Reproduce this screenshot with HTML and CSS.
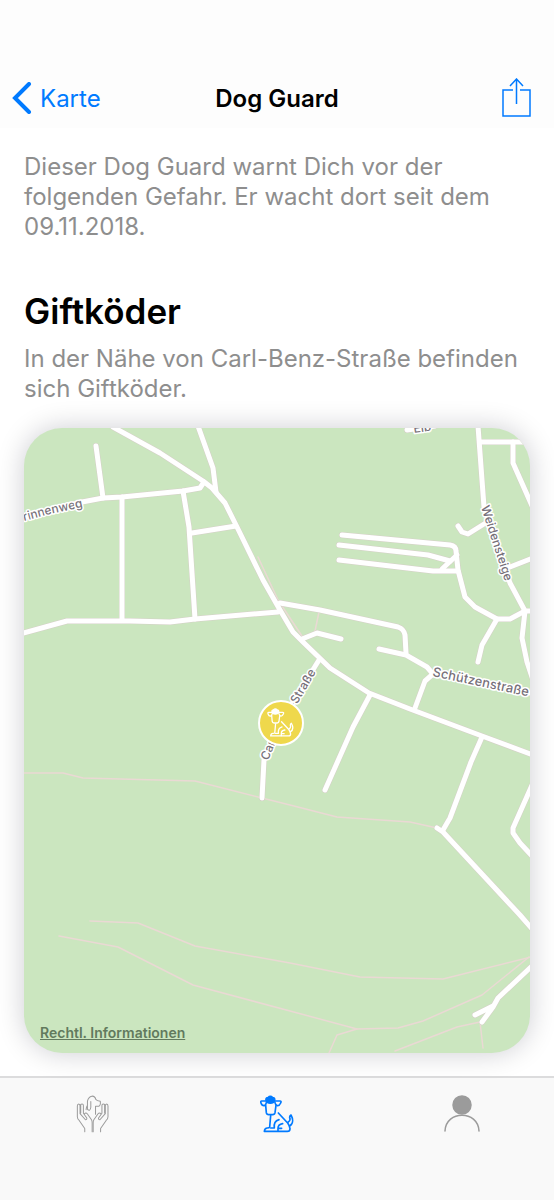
FILE: index.html
```html
<!DOCTYPE html>
<html lang="de">
<head>
<meta charset="utf-8">
<meta name="viewport" content="width=device-width, initial-scale=1">
<title>Dog Guard</title>
<link rel="stylesheet" href="styles.css">
</head>

<body>
<svg class="defs" aria-hidden="true">
    <symbol id="dog" viewBox="44 44 102 112">
        <path class="solid" d="M62 58 Q61 52 68 51 Q75 44 82 51 Q89 52 88 58 L85 65 Q75 70 65 65Z"/>
        <path d="M62 61 H49 Q45 61 47 67 Q50 76 57 75 Q62 73 63 66 M88 61 H104 Q109 61 106 67 Q102 76 96 75 Q90 73 89 66"/>
        <path d="M61 74 L63 96 Q64 102 70 102 H82 Q88 102 89 96 L92 74"/>
        <path d="M76 105 L73 139 Q72 142 66 142 Q58 142 57 152 H126 Q134 152 134 144 Q133 135 127 127 L99 97"/>
        <path d="M133 136 C145 129 143 114 137 103 Q131 107 134 114 Q135 121 128 125"/>
        <path d="M76 142 H87 Q84 122 101 117 M98 151 V143 Q98 131 112 129 M98 143 H109"/>
    </symbol>
</svg>

<header class="navbar">
    <a class="back" href="#karte">
        <svg class="chevron" viewBox="0 0 20 32" aria-hidden="true"><path d="M17 2 L3 16 L17 30"/></svg>
        <span>Karte</span>
    </a>
    <h2 class="navbar-title">Dog Guard</h2>
    <button class="share" type="button" aria-label="Teilen">
        <svg viewBox="0 0 30 40" aria-hidden="true"><path d="M12 12 H2 V38 H29 V12 H19 M15.500 26 V1 M9 8 L15.500 1 L22 8"/></svg>
    </button>
</header>

<main class="content">
    <p class="text">Dieser Dog Guard warnt Dich vor der folgenden Gefahr. Er wacht dort seit dem 09.11.2018.</p>
    <h1 class="danger">Giftköder</h1>
    <p class="text">In der Nähe von Carl-Benz-Straße befinden sich Giftköder.</p>

    <div class="map">
        <svg class="map-canvas" viewBox="24 428 506 625" role="img" aria-label="Karte">
            <defs>
                <g id="roads">
                    <path d="M113 427 L160 453 L203 481 L212 488 L225 503 L237 527 L263 580 L280 610 L293 632 L303 642 L330 668 L369 693 L410 709 L482 736 L533 755"/>
                    <path d="M198 426 L213 468 L216 492"/>
                    <path d="M96 446 L103 498"/>
                    <path d="M20 519 L50 510 L82 502 L103 498 L122 497 L183 491 L200 488 L204 482"/>
                    <path d="M122 497 V620"/>
                    <path d="M183 491 L189 527 L195 619"/>
                    <path d="M192 533 L236 526"/>
                    <path d="M20 634 L67 621 H130 L170 622 L195 619 L278 612"/>
                    <path d="M280 603 L320 610 L398 627 Q404 629 405 635 L406 653"/>
                    <path d="M302 639 L317 633 L341 639"/>
                    <path d="M379 649 L406 655 L427 667 L433 674 L425 681 L415 708"/>
                    <path d="M478 426 L484 507 L510 583 L525 611 H535"/>
                    <path d="M480 442 H533"/>
                    <path d="M513 442 V463 L533 508"/>
                    <path d="M458 526 L462 532 L468 534 L484 524"/>
                    <path d="M510 567 L533 558"/>
                    <path d="M342 535 L450 545 Q456 546 456 551 L458 570 L465 597 L475 607 L497 619 H510 L525 611"/>
                    <path d="M339 545 L428 555 L450 561"/>
                    <path d="M339 560 L433 571 H458"/>
                    <path d="M442 569 L457 555"/>
                    <path d="M497 619 L482 645 L478 662"/>
                    <path d="M525 611 L522 638 L527 662 L533 680"/>
                    <path d="M525 692 L535 694"/>
                    <path d="M407 430 L435 426"/>
                    <path d="M370 695 L353 727 L325 790"/>
                    <path d="M482 737 L471 762 L450 818 L443 830"/>
                    <path d="M437 828 L443 832 L520 915 L533 930"/>
                    <path d="M533 783 L513 828 V833 L520 843 L533 857"/>
                    <path d="M533 965 L498 998 L493 1007 L482 1022 M475 1015 L493 1006"/>
                    <path d="M319 660 L288 710 L273 743 L264 760 L262 798"/>
                </g>
                <path id="line-brinnenweg" d="M24 521 L50 514 L92 505"/>
                <path id="line-weidensteige" d="M481 507 L507 588"/>
                <path id="line-schuetzen" d="M432 676 L540 699"/>
                <path id="line-carl" d="M268 761 L278 737 L319 667"/>
            </defs>

            <g class="trails">
                <path d="M24 773 H63 L83 778 L195 781 L290 805 L337 817 L410 822 L437 828"/>
                <path d="M90 921 L138 923 L195 946 L290 963 L360 977 L443 979 L531 957"/>
                <path d="M59 936 L118 947 L193 985 L290 1011 L357 1029 L398 1028 L423 1021 L482 995 L529 957"/>
                <path d="M357 1029 L337 1035 L329 1053"/>
                <path d="M395 1051 L457 1027 L480 1022 L483 1048"/>
                <path d="M258 557 L278 600 L302 636 M319 612 L315 631"/>
            </g>
            <use class="road-edge" href="#roads"/>
            <use class="road" href="#roads"/>

            <g class="street-names">
                <text><textPath href="#line-brinnenweg">rinnenweg</textPath></text>
                <text><textPath href="#line-weidensteige">Weidensteige</textPath></text>
                <text class="main-street"><textPath href="#line-schuetzen">Schützenstraße</textPath></text>
                <text><textPath href="#line-carl">Carl-Benz-Straße</textPath></text>
                <text transform="translate(414 433) rotate(-8)">Eib</text>
            </g>

            <g class="pin">
                <circle cx="281" cy="723" r="22"/>
                <use href="#dog" x="267" y="708" width="27" height="29"/>
            </g>
        </svg>
        <a class="legal" href="#rechtliches">Rechtl. Informationen</a>
    </div>
</main>

<nav class="tabbar">
    <a class="tab" href="#helfen" aria-label="Helfen">
        <svg class="icon-hands" viewBox="46 46 98 112" aria-hidden="true">
            <path id="hand" d="M72 155 V145 L56 122 Q50 117 50 110 V78 Q50 72 54 72 Q58 72 58 78 V101 L74 119 Q79 119 78 114 L68 100 V77 Q68 72 64 72 Q59 72 60 78 V99 M71 102 Q75 96 80 102 L92 119 Q94 122 94 128 V155"/>
            <use href="#hand" transform="translate(191 0) scale(-1 1)"/>
            <path d="M76 89 Q76 82 80 76 V64 Q83 51 93 49 Q102 48 105 59 Q108 63 118 64 Q120 76 114 79 H104 V103 M80 77 V88 Q88 96 90 82 V65"/>
        </svg>
    </a>
    <a class="tab active" href="#karte" aria-label="Dog Guards" aria-current="page">
        <svg class="icon-dog" aria-hidden="true"><use href="#dog"/></svg>
    </a>
    <a class="tab" href="#profil" aria-label="Profil">
        <svg class="icon-person" viewBox="0 0 36 38" aria-hidden="true">
            <circle class="solid" cx="18" cy="10" r="9"/>
            <path d="M1 36 C2 15 34 15 35 36"/>
        </svg>
    </a>
</nav>
</body>
</html>
```
FILE: styles.css
```css
* {
    box-sizing: border-box;
}

body {
    display: flex;
    flex-direction: column;
    min-height: 100vh;
    margin: 0;
    background: #fff;
    color: #000;
    font-family: Inter, "Liberation Sans", sans-serif;
}

a {
    color: #007aff;
    text-decoration: none;
}

.defs {
    position: absolute;
    width: 0;
    height: 0;
}

/* Navigation oben */
.navbar {
    display: grid;
    grid-template-columns: 1fr auto 1fr;
    align-items: center;
    padding: 68px 12px 0;
    height: 128px;
    background: #fdfdfd;
    font-size: 24px;
}

.back {
    display: flex;
    align-items: center;
    gap: 8px;
}

.chevron {
    width: 20px;
    height: 32px;
    fill: none;
    stroke: #007aff;
    stroke-width: 4;
    stroke-linecap: round;
}

.navbar-title {
    margin: 0;
    font-size: 24px;
    font-weight: 600;
}

.share {
    justify-self: end;
    margin-right: 11px;
    padding: 0;
    border: 0;
    background: none;
    cursor: pointer;
}

.share svg {
    display: block;
    width: 30px;
    height: 40px;
    fill: none;
    stroke: #007aff;
    stroke-width: 1.5;
}

/* Inhalt */
.content {
    flex: 1;
    padding: 24px 24px 20px;
}

.text {
    margin: 0;
    color: #8e8e8e;
    font-size: 24px;
    line-height: 30px;
}

.danger {
    margin: 44px 0 8px;
    font-size: 35px;
    font-weight: 600;
    line-height: 50px;
}

/* Karte */
.map {
    position: relative;
    margin-top: 24px;
    overflow: hidden;
    border-radius: 38px;
    background: #cbe6bf;
    box-shadow: 0 0 28px rgba(0, 0, 30, 0.2);
}

.map-canvas {
    display: block;
    width: 100%;
    height: auto;
}

.trails,
.road,
.road-edge {
    fill: none;
    stroke-linecap: round;
    stroke-linejoin: round;
}

.trails {
    stroke: #ead9d4;
    stroke-width: 1.5;
}

.road-edge {
    stroke: #d5d0c8;
    stroke-width: 6;
}

.road {
    stroke: #fff;
    stroke-width: 5;
}

.street-names {
    fill: #77717a;
    stroke: #fff;
    stroke-width: 3;
    stroke-linejoin: round;
    paint-order: stroke;
    font-size: 12px;
    font-weight: 500;
}

.main-street {
    font-size: 13px;
}

.pin circle {
    fill: #efd84c;
    stroke: #fff;
    stroke-width: 2;
}

.pin use {
    color: #fff;
    fill: none;
    stroke: #fff;
    stroke-width: 5;
    stroke-linecap: round;
    stroke-linejoin: round;
}

.legal {
    position: absolute;
    left: 16px;
    bottom: 12px;
    color: #627a5d;
    font-size: 14px;
    font-weight: 600;
    text-decoration: underline;
}

/* Tableiste */
.tabbar {
    display: grid;
    grid-template-columns: repeat(3, 1fr);
    height: 124px;
    padding-top: 17px;
    border-top: 2px solid #dcdcdd;
    background: #f9f9f9;
}

.tab {
    display: flex;
    justify-content: center;
    color: #9b9b9b;
}

.tab.active {
    color: #007aff;
}

.tab svg {
    height: 38px;
    fill: none;
    stroke: currentColor;
    stroke-width: 4;
    stroke-linecap: round;
    stroke-linejoin: round;
}

.tab svg .solid,
.solid {
    fill: currentColor;
}

.tab .icon-hands {
    width: 33px;
    stroke-width: 3;
}

.tab .icon-dog {
    width: 34px;
    stroke-width: 5;
}

.tab .icon-person {
    width: 36px;
    stroke-width: 1.5;
}
```
